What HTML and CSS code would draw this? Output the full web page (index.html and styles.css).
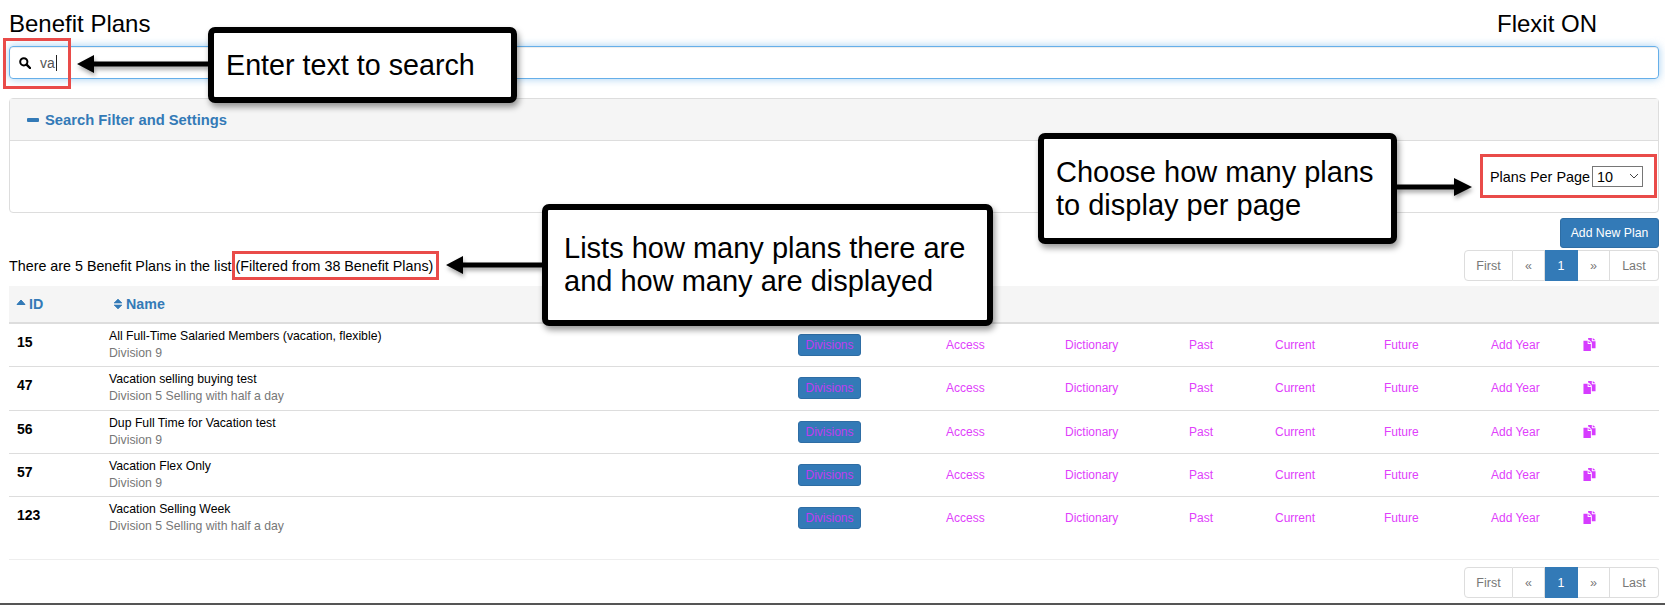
FILE: index.html
```html
<!DOCTYPE html>
<html lang="en">
<head>
<meta charset="utf-8">
<title>Benefit Plans</title>
<link rel="stylesheet" href="styles.css">
</head>
<body>
<main class="page">
  <header class="top">
    <h1 class="title">Benefit Plans</h1>
    <div class="brand">Flexit ON</div>
  </header>

  <div class="search">
    <svg class="search-icon" viewBox="0 0 12 12"><circle cx="4.8" cy="4.8" r="3.6" fill="none" stroke="#000" stroke-width="2"/><path d="M7.6 7.6 11 11" stroke="#000" stroke-width="2.4" stroke-linecap="round"/></svg>
    <span class="search-value">va</span>
  </div>

  <section class="panel">
    <div class="panel-head">
      <span class="minus"></span>
      <span class="panel-title">Search Filter and Settings</span>
    </div>
    <div class="panel-body">
      <label class="per-page">Plans Per Page
        <span class="select-wrap">
          <select class="per-select"><option>10</option><option>25</option><option>50</option></select>
          <svg class="chev" viewBox="0 0 10 6"><path d="M1 1 5 5 9 1" fill="none" stroke="#444" stroke-width="1"/></svg>
        </span>
      </label>
    </div>
  </section>

  <div class="actions"><button class="add-btn">Add New Plan</button></div>

  <div class="info-row">
    <p class="info">There are 5 Benefit Plans in the list (Filtered from 38 Benefit Plans)</p>
    <nav class="pager">
      <a class="pg pg-first">First</a><a class="pg pg-nav">«</a><a class="pg pg-on">1</a><a class="pg pg-nav">»</a><a class="pg pg-last">Last</a>
    </nav>
  </div>

  <div class="plans">
    <div class="row head">
      <div class="th th-id"><svg class="sort" viewBox="0 0 10 12"><path d="M5 2 9 6.500H1Z" fill="#337ab7" stroke="#337ab7" stroke-linejoin="round"/></svg>ID</div>
      <div class="th th-name"><svg class="sort" viewBox="0 0 10 12"><path d="M5 1 9 5H1ZM5 11 1 7H9Z" fill="#337ab7" stroke="#337ab7" stroke-width=".6" stroke-linejoin="round"/></svg>Name</div>
    </div>

    <div class="row item">
      <div class="id">15</div>
      <div class="name">All Full-Time Salaried Members (vacation, flexible)<small>Division 9</small></div>
      <div><a class="btn-div">Divisions</a></div><a class="lnk">Access</a><a class="lnk">Dictionary</a><a class="lnk">Past</a><a class="lnk">Current</a><a class="lnk">Future</a><a class="lnk">Add Year</a>
      <div class="lnk"><svg class="copy" viewBox="0 0 13 14"><path d="M0 3H4.500V6.500H8V14H0ZM5.500 3 8 5.500H5.500ZM5 0H9V3.500H13V11H9V5L6 2H5ZM10 0 13 2.500H10Z"/></svg></div>
    </div>
    <div class="row item">
      <div class="id">47</div>
      <div class="name">Vacation selling buying test<small>Division 5 Selling with half a day</small></div>
      <div><a class="btn-div">Divisions</a></div><a class="lnk">Access</a><a class="lnk">Dictionary</a><a class="lnk">Past</a><a class="lnk">Current</a><a class="lnk">Future</a><a class="lnk">Add Year</a>
      <div class="lnk"><svg class="copy" viewBox="0 0 13 14"><path d="M0 3H4.500V6.500H8V14H0ZM5.500 3 8 5.500H5.500ZM5 0H9V3.500H13V11H9V5L6 2H5ZM10 0 13 2.500H10Z"/></svg></div>
    </div>
    <div class="row item">
      <div class="id">56</div>
      <div class="name">Dup Full Time for Vacation test<small>Division 9</small></div>
      <div><a class="btn-div">Divisions</a></div><a class="lnk">Access</a><a class="lnk">Dictionary</a><a class="lnk">Past</a><a class="lnk">Current</a><a class="lnk">Future</a><a class="lnk">Add Year</a>
      <div class="lnk"><svg class="copy" viewBox="0 0 13 14"><path d="M0 3H4.500V6.500H8V14H0ZM5.500 3 8 5.500H5.500ZM5 0H9V3.500H13V11H9V5L6 2H5ZM10 0 13 2.500H10Z"/></svg></div>
    </div>
    <div class="row item">
      <div class="id">57</div>
      <div class="name">Vacation Flex Only<small>Division 9</small></div>
      <div><a class="btn-div">Divisions</a></div><a class="lnk">Access</a><a class="lnk">Dictionary</a><a class="lnk">Past</a><a class="lnk">Current</a><a class="lnk">Future</a><a class="lnk">Add Year</a>
      <div class="lnk"><svg class="copy" viewBox="0 0 13 14"><path d="M0 3H4.500V6.500H8V14H0ZM5.500 3 8 5.500H5.500ZM5 0H9V3.500H13V11H9V5L6 2H5ZM10 0 13 2.500H10Z"/></svg></div>
    </div>
    <div class="row item last">
      <div class="id">123</div>
      <div class="name">Vacation Selling Week<small>Division 5 Selling with half a day</small></div>
      <div><a class="btn-div">Divisions</a></div><a class="lnk">Access</a><a class="lnk">Dictionary</a><a class="lnk">Past</a><a class="lnk">Current</a><a class="lnk">Future</a><a class="lnk">Add Year</a>
      <div class="lnk"><svg class="copy" viewBox="0 0 13 14"><path d="M0 3H4.500V6.500H8V14H0ZM5.500 3 8 5.500H5.500ZM5 0H9V3.500H13V11H9V5L6 2H5ZM10 0 13 2.500H10Z"/></svg></div>
    </div>
  </div>

  <div class="foot">
    <nav class="pager">
      <a class="pg pg-first">First</a><a class="pg pg-nav">«</a><a class="pg pg-on">1</a><a class="pg pg-nav">»</a><a class="pg pg-last">Last</a>
    </nav>
  </div>
</main>
<div class="edge"></div>

<div class="mark mark-search"></div>
<div class="mark mark-perpage"></div>
<div class="mark mark-filter"></div>

<svg class="arrow arrow-search" viewBox="0 0 132 18"><path d="M0 9 17 0V6.500H132V11.500H17V18Z"/></svg>
<svg class="arrow arrow-perpage" viewBox="0 0 76 18"><path d="M76 9 58 0V6.500H0V11.500H58V18Z"/></svg>
<svg class="arrow arrow-filter" viewBox="0 0 96 18"><path d="M0 9 17 0V6.500H96V11.500H17V18Z"/></svg>

<div class="note note-search">Enter text to search</div>
<div class="note note-perpage">Choose how many plans<br>to display per page</div>
<div class="note note-filter">Lists how many plans there are<br>and how many are displayed</div>
</body>
</html>
```

FILE: styles.css
```css
* { box-sizing: border-box; }
html, body { margin: 0; padding: 0; background: #fff; }
body {
  position: relative;
  width: 1665px;
  height: 605px;
  overflow: hidden;
  font-family: "Liberation Sans", Arial, sans-serif;
  font-size: 12px;
  color: #000;
}
.page { padding: 0 6px 0 9px; height: 603px; }

.top { display: flex; justify-content: space-between; height: 46px; padding: 10px 62px 0 0; }
.title, .brand { margin: 0; font-size: 24px; font-weight: 400; line-height: 28px; }

.search {
  display: flex; align-items: center; height: 33px; padding-left: 9px;
  border: 1px solid #66afe9; border-radius: 4px;
  box-shadow: 0 0 8px rgba(102,175,233,.6), inset 0 1px 1px rgba(0,0,0,.075);
}
.search-icon { width: 12px; height: 12px; margin-right: 9px; }
.search-value { font-size: 14px; color: #555; padding-right: 1px; border-right: 1px solid #222; line-height: 16px; }

.panel { margin-top: 19px; height: 115px; border: 1px solid #ddd; border-radius: 4px; }
.panel-head {
  display: flex; align-items: center; height: 42px; padding-left: 17px;
  background: #f5f5f5; border-bottom: 1px solid #ddd;
}
.minus { width: 12px; height: 4px; margin-right: 6px; background: #337ab7; border-radius: 1px; }
.panel-title { color: #337ab7; font-size: 14.750px; font-weight: 700; }
.panel-body { display: flex; justify-content: flex-end; align-items: center; height: 71px; padding: 0 15px 0 0; }
.per-page { display: flex; align-items: center; gap: 2px; font-size: 14.400px; }
.select-wrap { position: relative; display: block; width: 51px; height: 21px; }
.per-select {
  appearance: none; display: block; width: 100%; height: 100%; padding: 0 0 0 4px;
  font-family: inherit; font-size: 14.400px; background: #fff; border: 1px solid #767676; border-radius: 0;
}
.chev { position: absolute; right: 4px; top: 7px; width: 10px; height: 6px; pointer-events: none; }

.actions { display: flex; justify-content: flex-end; margin-top: 5px; }
.add-btn {
  width: 99px; height: 30px; padding: 0; color: #fff; font-family: inherit; font-size: 12.250px;
  background: #337ab7; border: 1px solid #2e6da4; border-radius: 3px;
}

.info-row { display: flex; justify-content: space-between; align-items: flex-start; margin-top: 2px; height: 36px; }
.info { margin: 0; padding-top: 8px; font-size: 14.300px; line-height: 16px; }

.pager { display: flex; height: 31px; font-size: 12.500px; color: #777; }
.pg { display: flex; align-items: center; justify-content: center; border: 1px solid #ddd; border-left: 0; background: #fff; }
.pg-first { width: 49px; border-left: 1px solid #ddd; border-radius: 4px 0 0 4px; }
.pg-nav { width: 32px; }
.pg-on { width: 33px; color: #fff; background: #337ab7; border-color: #337ab7; }
.pg-last { width: 49px; border-radius: 0 4px 4px 0; }

.row { display: grid; grid-template-columns: 92px 689px 148px 119px 124px 86px 109px 107px 92px 84px; }
.head { height: 38px; align-items: center; background: #f5f5f5; border-bottom: 2px solid #ddd; }
.th { display: flex; align-items: center; gap: 3px; color: #337ab7; font-size: 14.250px; font-weight: 700; }
.th-id { padding-left: 7px; }
.th-name { padding-left: 12px; }
.sort { width: 10px; height: 12px; }
.item { height: 43.330px; border-bottom: 1px solid #ddd; }
.item.last { height: 63px; border-bottom: 1px solid #eee; }
.id { padding: 10px 0 0 8px; font-size: 14px; font-weight: 700; line-height: 17px; }
.name { padding: 4px 0 0 8px; line-height: 17px; font-size: 12.250px; }
.name small { display: block; font-size: 12.250px; color: #777; }
.btn-div {
  display: inline-block; width: 63px; height: 22px; margin: 10px 0 0 8px; text-align: center; line-height: 20px;
  color: #c13cf0; background: #337ab7; border: 1px solid #2e6da4; border-radius: 3px;
}
.lnk { padding: 13px 0 0 8px; line-height: 17px; color: #e040fb; }
.copy { width: 13px; height: 13px; margin-top: 1px; fill: #d63cff; display: block; }

.foot { display: flex; justify-content: flex-end; margin-top: 7px; }
.edge { height: 2px; background: #555; }

.mark { position: absolute; border: 3px solid #e94b49; }
.mark-search { left: 3px; top: 38px; width: 68px; height: 51px; }
.mark-perpage { left: 1480px; top: 154px; width: 177px; height: 44px; }
.mark-filter { left: 232px; top: 251px; width: 207px; height: 29px; }

.arrow { position: absolute; height: 18px; fill: #000; filter: drop-shadow(1px 3px 2px rgba(0,0,0,.35)); }
.arrow-search { left: 77px; top: 55px; width: 132px; }
.arrow-perpage { left: 1396px; top: 178px; width: 76px; }
.arrow-filter { left: 446px; top: 256px; width: 96px; }

.note {
  position: absolute; display: flex; align-items: center; padding-left: 12px;
  font-size: 29px; line-height: 33px; color: #000; background: #fff;
  border: 6px solid #000; border-radius: 7px; box-shadow: 2px 4px 6px rgba(0,0,0,.4);
}
.note-search { left: 208px; top: 27px; width: 309px; height: 76px; font-size: 28.700px; }
.note-perpage { left: 1038px; top: 133px; width: 359px; height: 111px; }
.note-filter { left: 542px; top: 204px; width: 451px; height: 122px; padding-left: 16px; }
```
